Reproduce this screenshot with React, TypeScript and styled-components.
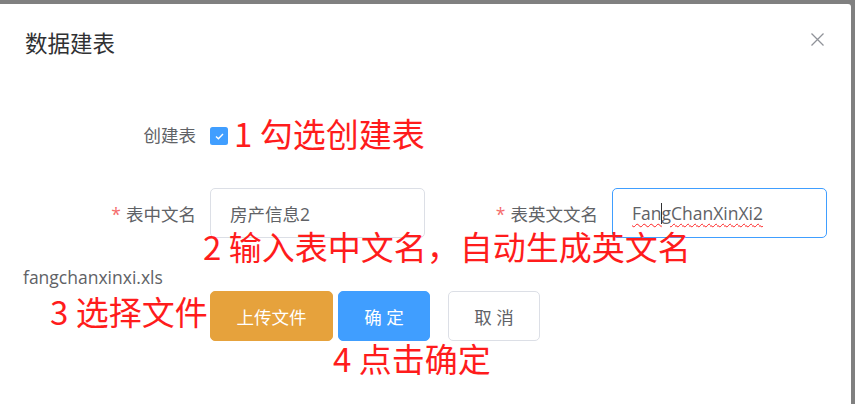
import * as React from "react";
import styled, { createGlobalStyle } from "styled-components";

const GlobalStyle = createGlobalStyle`
  html, body {
    margin: 0;
    padding: 0;
    background: #808080;
  }
  * {
    box-sizing: border-box;
  }
`;

const FONT = `"Open Sans", "Noto Sans CJK SC", sans-serif`;

const Page = styled.div`
  position: relative;
  width: 855px;
  height: 404px;
  padding-top: 4px;
  overflow: hidden;
  background: #808080;
  font-family: ${FONT};
`;

const Dialog = styled.div`
  position: relative;
  width: 851px;
  height: 400px;
  background: #fff;
  border-radius: 0 3px 0 0;
`;

const Header = styled.div`
  padding: 25px 25px 12.5px;
`;

const Title = styled.span`
  display: block;
  font-size: 22.5px;
  line-height: 30px;
  color: #303133;
`;

const CloseButton = styled.button`
  position: absolute;
  top: 25px;
  right: 24px;
  width: 20px;
  height: 20px;
  padding: 0;
  border: none;
  background: transparent;
  display: flex;
  align-items: center;
  justify-content: center;
  cursor: pointer;
`;

const Body = styled.div`
  padding: 37.5px 25px 0;
`;

const FormItem = styled.div<{ $mb?: number }>`
  display: flex;
  align-items: center;
  height: 50px;
  margin-bottom: ${({ $mb }) => $mb ?? 0}px;
`;

const Columns = styled.div`
  display: grid;
  grid-template-columns: 402px 400px;
  margin-bottom: 27px;
`;

const Label = styled.label`
  width: 185px;
  padding-right: 14px;
  text-align: right;
  font-size: 17.5px;
  color: #606266;
  white-space: nowrap;
`;

const Star = styled.span`
  color: #f56c6c;
  margin-right: 5px;
`;

const Checkbox = styled.span`
  width: 18px;
  height: 18px;
  margin-top: 4px;
  border-radius: 2.5px;
  background: #409eff;
  display: flex;
  align-items: center;
  justify-content: center;
`;

const Field = styled.div<{ $focused?: boolean }>`
  width: 215px;
  height: 50px;
  border: 1px solid ${({ $focused }) => ($focused ? "#409eff" : "#dcdfe6")};
  border-radius: 5px;
  padding: 0 19px;
  display: flex;
  align-items: center;
  font-size: 17.5px;
  color: #606266;
  white-space: nowrap;
`;

const Misspelled = styled.span`
  text-decoration: underline wavy #ff2020;
  text-decoration-thickness: 1px;
  text-underline-offset: 3px;
`;

const Caret = styled.span`
  display: inline-block;
  width: 1px;
  height: 21px;
  margin: 0 -0.5px;
  vertical-align: -4px;
  background: #303133;
`;

const FileName = styled.div`
  font-size: 17.5px;
  line-height: 24px;
  color: #606266;
  margin-left: -2px;
  margin-bottom: 2px;
`;

const ButtonRow = styled.div`
  display: flex;
  padding-left: 185px;
`;

const Button = styled.button<{ $kind: "warning" | "primary" | "plain"; $ml?: number; $w: number }>`
  width: ${({ $w }) => $w}px;
  height: 50px;
  padding: 0;
  margin-left: ${({ $ml }) => $ml ?? 0}px;
  border-radius: 5px;
  font-family: ${FONT};
  font-size: 17.5px;
  white-space: pre;
  cursor: pointer;
  border: 1px solid
    ${({ $kind }) =>
      $kind === "warning" ? "#e6a23c" : $kind === "primary" ? "#409eff" : "#dcdfe6"};
  background: ${({ $kind }) =>
    $kind === "warning" ? "#e6a23c" : $kind === "primary" ? "#409eff" : "#fff"};
  color: ${({ $kind }) => ($kind === "plain" ? "#606266" : "#fff")};
`;

// red notes painted over the screenshot
const Note = styled.div<{ $x: number; $y: number }>`
  position: absolute;
  left: ${({ $x }) => $x}px;
  top: ${({ $y }) => $y}px;
  font-family: "Noto Sans CJK SC", sans-serif;
  font-size: 33px;
  line-height: 33px;
  color: #ff1c1c;
  white-space: nowrap;
`;

function CloseIcon() {
  return (
    <svg width="13" height="13" viewBox="0 0 13 13">
      <path d="M0.5 0.5 L12.5 12.5 M12.5 0.5 L0.5 12.5" stroke="#909399" strokeWidth="1.3" fill="none" />
    </svg>
  );
}

function CheckMark() {
  return (
    <svg width="11" height="9" viewBox="0 0 11 9">
      <path d="M2 4.6 L4.4 6.8 L9 2" stroke="#fff" strokeWidth="1.4" fill="none" />
    </svg>
  );
}

export default function App() {
  return (
    <>
      <GlobalStyle />
      <Page>
        <Dialog>
          <Header>
            <Title>数据建表</Title>
            <CloseButton aria-label="关闭">
              <CloseIcon />
            </CloseButton>
          </Header>
          <Body>
            <FormItem $mb={29}>
              <Label>创建表</Label>
              <Checkbox>
                <CheckMark />
              </Checkbox>
            </FormItem>
            <Columns>
              <FormItem>
                <Label>
                  <Star>*</Star>表中文名
                </Label>
                <Field>房产信息2</Field>
              </FormItem>
              <FormItem>
                <Label>
                  <Star>*</Star>表英文文名
                </Label>
                <Field $focused>
                  <Misspelled>
                    Fan<Caret />gChanXinXi2
                  </Misspelled>
                </Field>
              </FormItem>
            </Columns>
            <FileName>fangchanxinxi.xls</FileName>
            <ButtonRow>
              <Button $kind="warning" $w={123}>上传文件</Button>
              <Button $kind="primary" $w={92} $ml={5}>确 定</Button>
              <Button $kind="plain" $w={92} $ml={18}>取 消</Button>
            </ButtonRow>
          </Body>
        </Dialog>
        <Note $x={234} $y={117}>1 勾选创建表</Note>
        <Note $x={203} $y={230}>2 输入表中文名，自动生成英文名</Note>
        <Note $x={50} $y={295}>3 选择文件</Note>
        <Note $x={333} $y={342}>4 点击确定</Note>
      </Page>
    </>
  );
}
